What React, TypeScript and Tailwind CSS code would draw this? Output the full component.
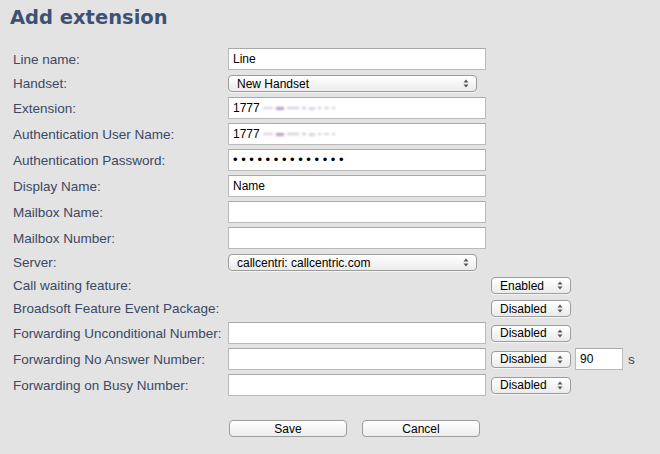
import React from "react";

const Arrows = () => (
  <svg width="6" height="9" viewBox="0 0 6 9" className="shrink-0">
    <path d="M0.5 3.5 L3 0.5 L5.5 3.5 Z" fill="#555" />
    <path d="M0.5 5.5 L3 8.5 L5.5 5.5 Z" fill="#555" />
  </svg>
);

const Input = ({ children, w = "w-[258px]" }: { children?: React.ReactNode; w?: string }) => (
  <div
    className={`${w} h-[22px] bg-white border border-[#bababa] border-t-[#a9a9a9] flex items-center pl-[4px] text-[12px] text-black shrink-0 overflow-hidden whitespace-nowrap`}
  >
    {children}
  </div>
);

const Select = ({ children, w }: { children: React.ReactNode; w: string }) => (
  <div
    className={`${w} h-[17px] rounded-[4px] border border-[#9c9c9c] bg-gradient-to-b from-white to-[#ebebeb] flex items-center justify-between pl-[8px] pr-[7px] text-[12px] text-black shrink-0 shadow-[0_1px_0_rgba(255,255,255,0.6)]`}
  >
    <span className="leading-none">{children}</span>
    <Arrows />
  </div>
);

const Blur = () => (
  <span className="flex items-center ml-[3px] gap-[3px] blur-[0.8px]">
    <span className="w-[10px] h-[2px] bg-[#d6cde0]" />
    <span className="w-[8px] h-[3px] bg-[#b49cc4]" />
    <span className="w-[12px] h-[2px] bg-[#d0c8d8]" />
    <span className="w-[4px] h-[2px] bg-[#c9c0d2]" />
    <span className="w-[6px] h-[3px] bg-[#d9d2df]" />
    <span className="w-[3px] h-[2px] bg-[#ccc5d4]" />
    <span className="w-[5px] h-[2px] bg-[#d9d4de]" />
    <span className="w-[3px] h-[2px] bg-[#d0cad6]" />
  </span>
);

const Row = ({
  label,
  tall = true,
  children,
}: {
  label: string;
  tall?: boolean;
  children?: React.ReactNode;
}) => (
  <div className={`flex items-center ${tall ? "h-[26px]" : "h-[23px]"}`}>
    <div className="w-[215px] shrink-0 pt-[2px] text-[13.5px] text-[#3b4964] whitespace-nowrap">{label}</div>
    {children}
  </div>
);

const Spacer = () => <div className="w-[258px] shrink-0" />;

export default function App() {
  return (
    <div className="w-[660px] h-[454px] bg-[#e3e3e3] overflow-hidden font-['Liberation_Sans',Arial,sans-serif]">
      <h1 className="pl-[10px] pt-[6px] leading-[24px] text-[19.5px] font-bold text-[#3e5173] font-['DejaVu_Sans',Verdana,sans-serif]">
        Add extension
      </h1>
      <div className="mt-[16px] pl-[13px] flex flex-col">
        <Row label="Line name:">
          <Input>Line</Input>
        </Row>
        <Row label="Handset:" tall={false}>
          <Select w="w-[249px]">New Handset</Select>
        </Row>
        <Row label="Extension:">
          <Input>
            <span>1777</span>
            <Blur />
          </Input>
        </Row>
        <Row label="Authentication User Name:">
          <Input>
            <span>1777</span>
            <Blur />
          </Input>
        </Row>
        <Row label="Authentication Password:">
          <Input>
            <span className="text-[13px] tracking-[3.6px]">••••••••••••••</span>
          </Input>
        </Row>
        <Row label="Display Name:">
          <Input>Name</Input>
        </Row>
        <Row label="Mailbox Name:">
          <Input />
        </Row>
        <Row label="Mailbox Number:">
          <Input />
        </Row>
        <Row label="Server:" tall={false}>
          <Select w="w-[249px]">callcentri: callcentric.com</Select>
        </Row>
        <Row label="Call waiting feature:" tall={false}>
          <Spacer />
          <div className="ml-[5px]">
            <Select w="w-[80px]">Enabled</Select>
          </div>
        </Row>
        <Row label="Broadsoft Feature Event Package:" tall={false}>
          <Spacer />
          <div className="ml-[5px]">
            <Select w="w-[80px]">Disabled</Select>
          </div>
        </Row>
        <Row label="Forwarding Unconditional Number:">
          <Input />
          <div className="ml-[5px]">
            <Select w="w-[80px]">Disabled</Select>
          </div>
        </Row>
        <Row label="Forwarding No Answer Number:">
          <Input />
          <div className="ml-[5px]">
            <Select w="w-[80px]">Disabled</Select>
          </div>
          <div className="ml-[4px]">
            <Input w="w-[48px]">90</Input>
          </div>
          <span className="ml-[5px] pt-[2px] text-[13.5px] text-[#3b4964]">s</span>
        </Row>
        <Row label="Forwarding on Busy Number:">
          <Input />
          <div className="ml-[5px]">
            <Select w="w-[80px]">Disabled</Select>
          </div>
        </Row>
      </div>
      <div className="mt-[22px] pl-[229px] flex gap-[15px]">
        <button className="w-[118px] h-[17px] rounded-[4px] border border-[#9c9c9c] bg-gradient-to-b from-white to-[#ededed] text-[12px] text-black leading-none flex items-center justify-center">
          Save
        </button>
        <button className="w-[118px] h-[17px] rounded-[4px] border border-[#9c9c9c] bg-gradient-to-b from-white to-[#ededed] text-[12px] text-black leading-none flex items-center justify-center">
          Cancel
        </button>
      </div>
    </div>
  );
}
